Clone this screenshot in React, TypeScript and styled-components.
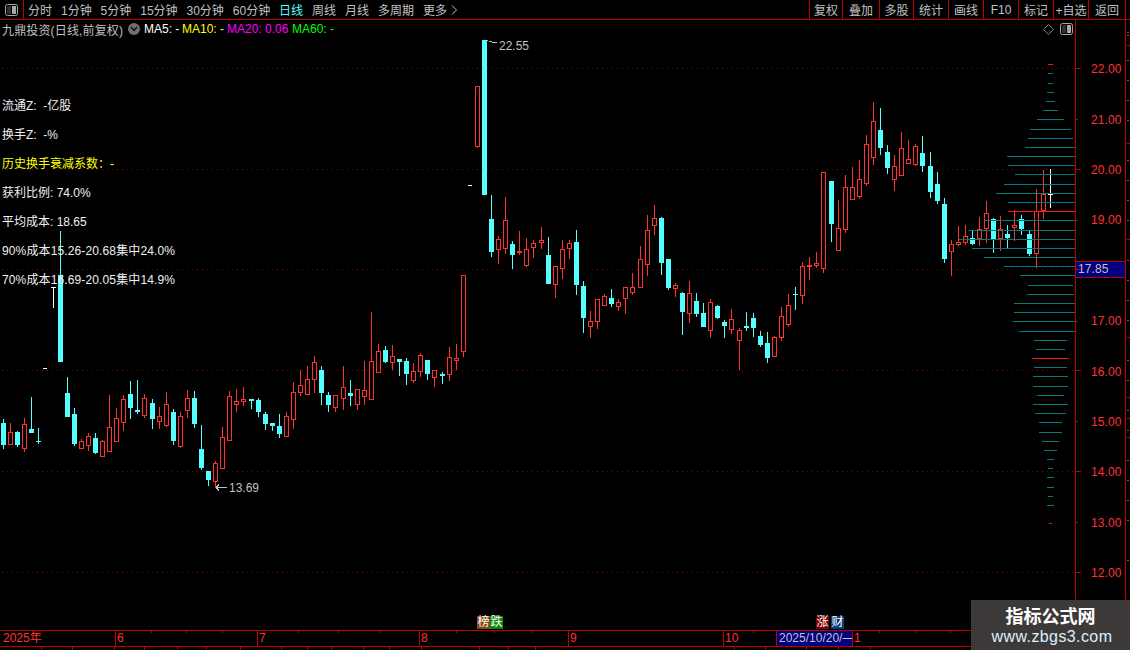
import React from "react";
import styled, { createGlobalStyle } from "styled-components";

const RED = "#ff3232";
const AXIS = "#c00000";
const CYAN = "#54ffff";
const GRAY = "#c0c0c0";
const FONT = `"Liberation Sans", "Noto Sans CJK SC", sans-serif`;

const Global = createGlobalStyle`
  html, body { margin: 0; padding: 0; background: #000; }
  body { font-family: ${FONT}; font-size: 12px; }
`;

const Page = styled.div`
  position: relative; width: 1130px; height: 650px; overflow: hidden;
  background: #000; color: ${GRAY}; display: flex; flex-direction: column;
`;
const Toolbar = styled.div`
  height: 19px; flex: none; display: flex; align-items: stretch;
  border-bottom: 1px solid ${AXIS}; padding-right: 4px;
`;
const LayoutButton = styled.div`
  width: 23px; flex: none; border-right: 1px solid ${AXIS};
  display: flex; align-items: center; justify-content: center;
`;
const Periods = styled.div`
  display: flex; align-items: center; gap: 8.95px; margin-left: 4px;
`;
const Period = styled.span<{ $active?: boolean }>`
  color: ${(p) => (p.$active ? CYAN : GRAY)}; white-space: nowrap; display: flex; align-items: center; gap: 4px;
`;
const Actions = styled.div`
  margin-left: auto; display: flex; border-left: 1px solid ${AXIS};
`;
const Action = styled.div<{ $w: number }>`
  width: ${(p) => p.$w}px; box-sizing: border-box; border-right: 1px solid ${AXIS};
  display: flex; align-items: center; justify-content: center; white-space: nowrap;
`;
const Body = styled.div`
  height: 610px; flex: none; display: flex;
`;
const ChartPane = styled.div`
  position: relative; width: 1075px; flex: none;
`;
const Canvas = styled.svg`
  position: absolute; left: 0; top: 0; overflow: visible; display: block;
`;
const Legend = styled.div`
  position: relative; height: 18px; display: flex; align-items: center; padding-left: 2px; white-space: nowrap;
`;
const StockName = styled.span`
  width: 126px; letter-spacing: 0.15px;
`;
const MenuDot = styled.span`
  width: 12px; height: 12px; border-radius: 50%; background: #707070; margin-right: 4px; flex: none;
  display: flex; align-items: center; justify-content: center;
`;
const MaItem = styled.span<{ $color: string; $w: number }>`
  color: ${(p) => p.$color}; width: ${(p) => p.$w}px; flex: none;
`;
const LegendTools = styled.div`
  position: absolute; right: 2px; top: 3px; display: flex; align-items: center; gap: 6px;
`;
const InfoPanel = styled.div`
  position: relative; margin-top: 54px; padding-left: 2px; display: flex; flex-direction: column;
`;
const InfoRow = styled.div<{ $accent?: boolean; $wide?: boolean }>`
  height: 29px; line-height: 29px; white-space: pre; color: ${(p) => (p.$accent ? "#ffff00" : "#f0f0f0")};
  letter-spacing: ${(p) => (p.$wide ? "0.13px" : "0")};
`;
const PriceMark = styled.span<{ $x: number; $y: number }>`
  position: absolute; left: ${(p) => p.$x}px; top: ${(p) => p.$y - 20 - 7}px; line-height: 14px; color: ${GRAY};
`;
const Badge = styled.span<{ $x: number; $bg: string }>`
  position: absolute; left: ${(p) => p.$x}px; top: 596px; width: 13px; height: 13px; line-height: 13px;
  text-align: center; background: ${(p) => p.$bg}; color: #fff; font-size: 12px;
`;
const PriceAxis = styled.div`
  width: 51px; flex: none; box-sizing: border-box; border-left: 1px solid ${AXIS}; border-right: 1px solid ${AXIS};
  padding-top: 24px; display: flex; flex-direction: column;
`;
const PriceRow = styled.div<{ $current?: boolean }>`
  height: 50.4px; flex: none; display: flex; align-items: center; color: ${RED};
  padding-left: ${(p) => (p.$current ? "0" : "15px")};
  font-size: 12px; letter-spacing: 0.1px;
`;
const CurrentPrice = styled.span`
  display: block; width: 100%; box-sizing: border-box; height: 17px; line-height: 15px; margin-top: -2px;
  background: #000080; border-top: 1px solid ${AXIS}; border-bottom: 1px solid ${AXIS};
  color: ${GRAY}; padding-left: 2px; font-size: 12px;
`;
const TimeAxis = styled.div`
  height: 17px; flex: none; box-sizing: border-box; display: flex;
  border-top: 1px solid ${AXIS}; border-bottom: 1px solid ${AXIS};
`;
const TimeCell = styled.div<{ $w: number; $first?: boolean; $pad?: number }>`
  width: ${(p) => p.$w}px; flex: none; box-sizing: border-box; color: ${RED}; line-height: 15px;
  padding-left: ${(p) => p.$pad ?? 1}px;
  border-left: ${(p) => (p.$first ? "none" : `1px solid ${AXIS}`)};
`;
const DateCell = styled.div`
  width: 77px; flex: none; box-sizing: border-box; background: #000080; color: ${GRAY}; line-height: 15px;
  padding-left: 2px; border-left: 1px solid ${AXIS}; border-right: 1px solid ${AXIS}; white-space: nowrap; overflow: hidden;
`;
const StatusRow = styled.div`
  flex: 1; display: flex;
`;
const StatusCell = styled.div<{ $w: number }>`
  width: ${(p) => p.$w}px; flex: none; box-sizing: border-box; border-right: 1px solid ${AXIS};
`;
const Watermark = styled.div`
  position: absolute; left: 971px; top: 600px; width: 159px; height: 50px; background: #3e3939;
  display: flex; flex-direction: column; align-items: center; justify-content: center;
`;
const WatermarkTitle = styled.div`
  color: #fff; font-size: 18px; font-weight: 700; line-height: 24px; font-family: "Noto Sans CJK SC", sans-serif;
`;
const WatermarkUrl = styled.div`
  color: #dcefff; font-size: 16px; line-height: 20px; letter-spacing: 0.4px; padding-left: 3px;
`;

type Kind = "r" | "c" | "w";
type C = [number, number, number, number, number, Kind];
const candles: C[] = [
  [3,419,423,445,449,"c"],[10,423,432,445,445,"r"],[17,431,432,445,447,"c"],[24,418,424,449,452,"r"],
  [31,397,429,433,433,"c"],[38,428,441,442,444,"c"],[53,287,287,288,308,"w"],[60,231,275,362,362,"c"],
  [67,377,393,417,417,"c"],[74,408,414,444,446,"c"],[81,439,441,449,449,"r"],[88,433,436,446,451,"r"],
  [95,433,438,453,454,"c"],[102,440,441,457,457,"r"],[109,395,427,452,452,"r"],[116,408,418,442,442,"r"],
  [123,395,399,423,431,"r"],[130,381,394,408,419,"c"],[137,380,410,412,414,"c"],[144,394,398,416,418,"r"],
  [152,399,403,419,429,"c"],[159,407,416,422,429,"r"],[166,392,404,426,427,"r"],[173,409,412,441,445,"c"],
  [180,412,416,447,448,"r"],[187,390,398,411,418,"r"],[194,391,398,424,428,"c"],[201,425,449,468,470,"c"],
  [208,471,471,480,486,"c"],[215,461,463,482,488,"r"],[222,427,437,469,469,"r"],[229,391,396,441,441,"r"],
  [236,389,401,405,412,"r"],[243,387,399,402,406,"r"],[251,399,399,401,409,"c"],[258,398,400,412,417,"c"],
  [265,412,414,424,430,"c"],[272,423,423,426,431,"c"],[279,414,426,434,438,"c"],[286,412,416,437,437,"r"],
  [293,382,392,420,429,"r"],[300,370,385,393,396,"r"],[307,366,379,395,395,"r"],[314,356,362,380,393,"r"],
  [321,366,370,393,405,"c"],[328,392,395,405,412,"c"],[335,395,395,408,412,"r"],[343,366,387,399,410,"r"],
  [350,380,393,396,406,"c"],[357,389,389,405,410,"r"],[364,361,390,397,405,"r"],[371,312,361,400,400,"r"],
  [378,344,351,373,373,"r"],[385,346,350,362,363,"c"],[392,345,356,363,370,"r"],[399,359,359,362,376,"c"],
  [406,358,361,374,385,"c"],[413,363,371,381,383,"r"],[420,353,355,372,377,"r"],[427,360,360,374,380,"c"],
  [434,370,370,378,387,"r"],[442,372,374,376,384,"c"],[449,347,357,375,381,"r"],[456,344,358,361,370,"r"],
  [463,275,275,352,357,"r"],[477,86,86,147,148,"r"],[484,40,40,195,195,"c"],
  [491,195,219,252,257,"c"],[498,236,239,250,264,"r"],[505,197,220,249,254,"r"],[512,241,244,255,269,"c"],
  [519,231,251,253,255,"r"],[526,238,249,266,267,"r"],[533,240,243,248,258,"r"],[541,227,240,243,249,"r"],
  [548,237,255,284,284,"c"],[555,266,266,285,298,"r"],[562,240,249,269,279,"r"],[569,240,243,249,259,"r"],
  [576,230,242,285,295,"c"],[583,281,286,318,333,"c"],[590,311,321,327,338,"r"],[597,299,299,322,329,"r"],
  [604,294,296,306,306,"r"],[611,289,298,304,307,"c"],[618,299,302,307,311,"r"],[625,287,287,299,314,"r"],
  [632,273,287,293,295,"r"],[640,246,259,288,288,"r"],[647,215,230,265,276,"r"],[654,205,218,226,235,"r"],
  [661,217,218,263,275,"c"],[668,259,259,288,290,"c"],[675,283,285,289,297,"r"],[682,292,293,312,335,"c"],
  [689,281,293,314,323,"r"],[696,293,301,314,317,"c"],[703,303,313,327,327,"c"],[710,299,302,331,338,"r"],
  [717,305,306,318,319,"c"],[724,320,322,326,338,"c"],[731,309,319,330,334,"r"],[739,328,330,341,370,"r"],
  [746,312,326,328,331,"c"],[753,313,318,328,337,"c"],[760,331,336,345,347,"c"],[767,332,343,358,363,"c"],
  [774,336,337,357,357,"r"],[781,307,316,338,341,"r"],[788,294,305,325,327,"r"],[795,287,294,295,310,"c"],
  [802,262,266,296,304,"r"],[809,257,265,267,280,"r"],[816,252,263,266,268,"r"],[823,172,172,269,273,"r"],
  [831,181,181,224,242,"c"],[838,200,228,251,251,"r"],[845,175,187,230,233,"r"],[852,167,187,200,200,"r"],
  [859,160,179,197,199,"r"],[866,135,144,184,186,"r"],[873,102,121,158,165,"r"],[880,108,130,148,155,"c"],
  [887,145,152,168,174,"c"],[894,155,166,180,191,"r"],[901,132,148,176,176,"r"],[908,140,159,164,164,"r"],
  [915,144,146,165,166,"r"],[922,136,153,166,172,"c"],[930,152,166,192,198,"c"],[937,172,184,201,204,"c"],
  [944,198,204,259,263,"c"],[951,240,244,252,276,"r"],[958,226,242,245,246,"r"],[965,225,236,243,245,"r"],
  [972,231,238,244,245,"c"],[979,217,229,239,246,"r"],[986,201,213,229,243,"r"],[993,218,219,239,253,"c"],
  [1000,216,229,239,251,"r"],[1007,225,234,238,248,"c"],[1014,210,225,228,241,"r"],[1021,215,219,229,235,"c"],
  [1029,231,234,254,256,"c"],[1036,189,211,254,268,"r"],[1043,170,194,211,219,"r"],[1050,169,194,195,208,"w"],
];
type P = [number, number, number, 1?];
const profile: P[] = [
  [64,1048,1053,1],[73,1048,1053],[83,1048,1053],[92,1047,1054],[101,1046,1055],[110,1043,1058],[119,1037,1064],
  [129,1030,1071],[138,1028,1073],[147,1025,1075],[156,1007,1075],[165,1008,1075],[174,1015,1075],[184,1004,1075],
  [193,996,1075],[202,1008,1075],[211,1008,1075,1],[220,985,1075],[230,969,1075],[239,959,1075],[248,972,1075],
  [257,984,1075],[266,1004,1075],[275,1020,1075],[285,1028,1073],[294,1027,1074],[303,1014,1075],[312,1014,1075],
  [321,1013,1075],[331,1019,1075],[340,1034,1067],[349,1036,1065],[358,1032,1069,1],[367,1034,1067],[376,1033,1068],
  [386,1033,1068],[395,1037,1064],[404,1033,1068],[413,1035,1066],[422,1039,1062],[432,1039,1062],[441,1042,1059],
  [450,1044,1057],[459,1047,1054],[468,1048,1053],[477,1047,1054],[487,1047,1054],[496,1048,1053],[505,1047,1054],
  [523,1049,1052,1],
];
const gridY = [68, 169, 269, 370, 471, 572];
const longTicks = [68, 169, 269, 370, 471, 572];
const shortTicks = [119, 220, 321, 421, 522];
const timeTicks = [151, 186, 222, 298, 338, 379, 456, 494, 531, 753, 879, 915, 950];
const stripStubs = [45, 143, 239, 337, 397, 418, 437];
const stripTicks = [32, 35, 60, 80, 100, 120, 160, 180, 200, 220, 260, 280, 300, 320, 360, 380, 410, 430, 460, 480, 500, 520, 560, 600];

const Candle = ({ d }: { d: C }) => {
  const [x, hi, top, bot, lo, k] = d;
  const color = k === "r" ? RED : k === "c" ? CYAN : "#ffffff";
  const cx = x + 0.5;
  if (k === "w") {
    return (
      <g stroke={color} fill="none">
        <path d={`M${cx} ${hi}V${lo}M${x - 2} ${top + 0.5}H${x + 3}`} />
      </g>
    );
  }
  if (k === "c") {
    return (
      <g>
        <path d={`M${cx} ${hi}V${lo}`} stroke={color} />
        <rect x={x - 2} y={top} width={5} height={Math.max(bot - top, 1)} fill={color} />
      </g>
    );
  }
  return (
    <g>
      <path d={`M${cx} ${hi}V${top}M${cx} ${bot}V${lo}`} stroke={color} />
      <rect x={x - 1.5} y={top + 0.5} width={4} height={Math.max(bot - top - 1, 1)} fill="#000" stroke={color} />
    </g>
  );
};

const Chart = () => (
  <Canvas width={1130} height={630} viewBox="0 20 1130 630" shapeRendering="crispEdges" fill="none">
    {gridY.map((y) => (
      <path key={y} d={`M2 ${y + 0.5}H1075`} stroke="#8a0000" strokeDasharray="1 4" />
    ))}
    {candles.map((d) => (
      <Candle key={d[0]} d={d} />
    ))}
    {profile.map(([y, a, b, r]) => (
      <path key={y} d={`M${a} ${y + 0.5}H${b}`} stroke={r ? "#ff1010" : "#007a7a"} />
    ))}
    <path d="M43 368.5H47M468 185.5H472" stroke="#fff" />
    <path d="M486 41l2-1M486 40v3M489 41l3 1h1l4 1" stroke={GRAY} />
    <path d="M216 487.5H227M216 487.5l3-3M216 487.5l3 3" stroke={GRAY} />
    {longTicks.map((y) => (
      <path key={y} d={`M1076 ${y + 0.5}H1081`} stroke={AXIS} />
    ))}
    {shortTicks.map((y) => (
      <path key={y} d={`M1076 ${y + 0.5}H1078`} stroke={AXIS} />
    ))}
    {stripStubs.map((y) => (
      <path key={y} d={`M1127 ${y + 0.5}H1130`} stroke={AXIS} />
    ))}
    {stripTicks.map((y) => (
      <path key={y} d={`M1127 ${y + 0.5}H1129`} stroke="#a04040" />
    ))}
    {timeTicks.map((x) => (
      <path key={x} d={`M${x + 0.5} 631V633`} stroke={AXIS} />
    ))}
  </Canvas>
);

const periods = ["分时", "1分钟", "5分钟", "15分钟", "30分钟", "60分钟", "日线", "周线", "月线", "多周期"];
const actions: [string, number][] = [
  ["复权", 33], ["叠加", 37], ["多股", 34], ["统计", 35], ["画线", 35], ["F10", 35], ["标记", 35], ["+自选", 35], ["返回", 37],
];
const info = ["流通Z:  -亿股", "换手Z:  -%", "历史换手衰减系数：-", "获利比例: 74.0%", "平均成本: 18.65", "90%成本15.26-20.68集中24.0%", "70%成本16.69-20.05集中14.9%"];
const prices = ["22.00", "21.00", "20.00", "19.00", "", "17.00", "16.00", "15.00", "14.00", "13.00", "12.00"];
const statusWidths = [42, 31, 42, 30, 33, 29, 34, 41, 26, 24, 32, 26, 32, 58, 29, 27, 199, 31, 41, 32, 32];

const PanelIcon = () => (
  <svg width="13" height="12" viewBox="0 0 13 12">
    <rect x="0.5" y="0.5" width="12" height="11" rx="2" fill="none" stroke="#a8a8a8" />
    <rect x="2" y="2" width="4" height="8" fill="#303030" />
    <rect x="7" y="2" width="4" height="8" fill="#a8a8a8" />
  </svg>
);

export default function App() {
  return (
    <Page>
      <Global />
      <Toolbar>
        <LayoutButton>
          <PanelIcon />
        </LayoutButton>
        <Periods>
          {periods.map((p) => (
            <Period key={p} $active={p === "日线"}>{p}</Period>
          ))}
          <Period>
            更多
            <svg width="7" height="10" viewBox="0 0 7 10" fill="none" stroke={GRAY}>
              <path d="M1 0.5L5.5 5L1 9.5" />
            </svg>
          </Period>
        </Periods>
        <Actions>
          {actions.map(([a, w]) => (
            <Action key={a} $w={w}>{a}</Action>
          ))}
        </Actions>
      </Toolbar>
      <Body>
        <ChartPane>
          <Chart />
          <Legend>
            <StockName>九鼎投资(日线,前复权)</StockName>
            <MenuDot>
              <svg width="8" height="6" viewBox="0 0 8 6" fill="none" stroke="#111" strokeWidth="1.4">
                <path d="M1 1L4 4.5L7 1" />
              </svg>
            </MenuDot>
            <MaItem $color="#ffffff" $w={38}>MA5: -</MaItem>
            <MaItem $color="#ffff00" $w={45}>MA10: -</MaItem>
            <MaItem $color="#ff00ff" $w={65}>MA20: 0.06</MaItem>
            <MaItem $color="#00ff00" $w={45}>MA60: -</MaItem>
            <LegendTools>
              <svg width="11" height="11" viewBox="0 0 11 11" fill="none" stroke="#808080">
                <path d="M5.5 0.5L10.5 5.5L5.5 10.5L0.5 5.5Z" />
              </svg>
              <PanelIcon />
            </LegendTools>
          </Legend>
          <InfoPanel>
            {info.map((t, i) => (
              <InfoRow key={t} $accent={i === 2} $wide={i > 4}>{t}</InfoRow>
            ))}
          </InfoPanel>
          <PriceMark $x={499} $y={46}>22.55</PriceMark>
          <PriceMark $x={229} $y={488}>13.69</PriceMark>
          <Badge $x={477} $bg="#84470f">榜</Badge>
          <Badge $x={490} $bg="#0a860a">跌</Badge>
          <Badge $x={816} $bg="#7c0000">涨</Badge>
          <Badge $x={831} $bg="#0b3c78">财</Badge>
        </ChartPane>
        <PriceAxis>
          {prices.map((p, i) => (
            <PriceRow key={i} $current={!p}>
              {p || <CurrentPrice>17.85</CurrentPrice>}
            </PriceRow>
          ))}
        </PriceAxis>
      </Body>
      <TimeAxis>
        <TimeCell $w={115} $first $pad={3}>2025年</TimeCell>
        <TimeCell $w={142}>6</TimeCell>
        <TimeCell $w={162}>7</TimeCell>
        <TimeCell $w={149}>8</TimeCell>
        <TimeCell $w={155}>9</TimeCell>
        <TimeCell $w={53}>10</TimeCell>
        <DateCell>2025/10/20/—</DateCell>
        <TimeCell $w={120} $first>1</TimeCell>
      </TimeAxis>
      <StatusRow>
        {statusWidths.map((w, i) => (
          <StatusCell key={i} $w={w} />
        ))}
      </StatusRow>
      <Watermark>
        <WatermarkTitle>指标公式网</WatermarkTitle>
        <WatermarkUrl>www.zbgs3.com</WatermarkUrl>
      </Watermark>
    </Page>
  );
}
